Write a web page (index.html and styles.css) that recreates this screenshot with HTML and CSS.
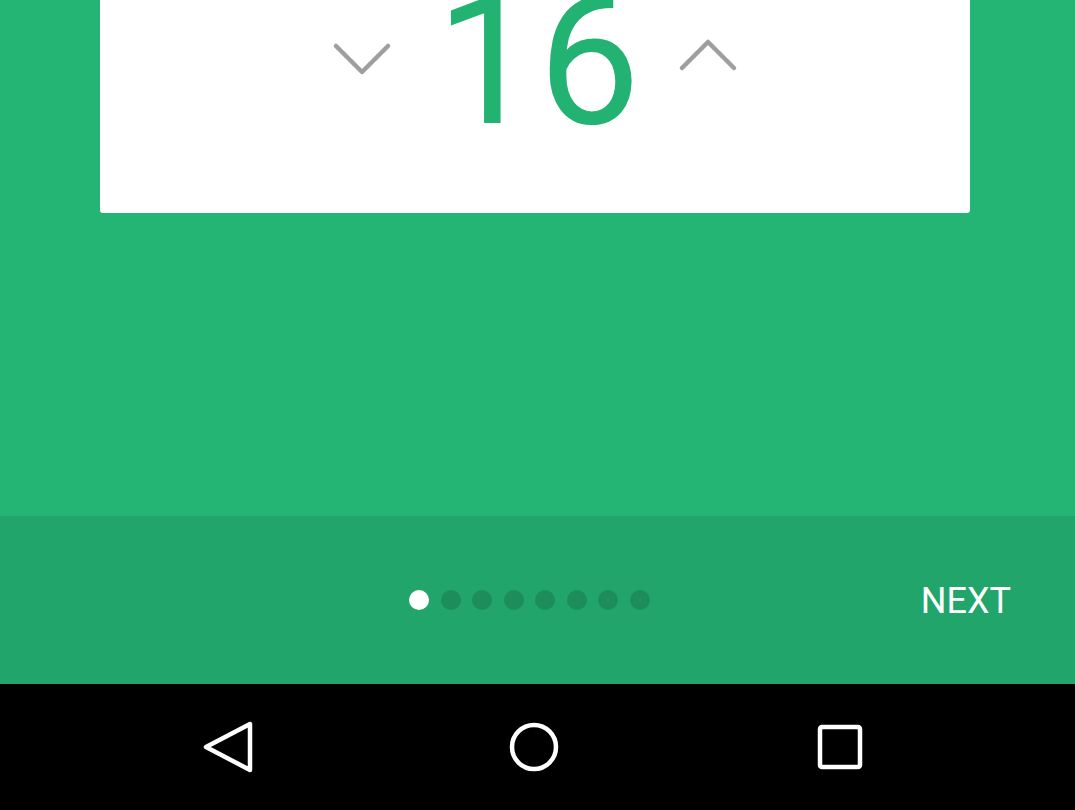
FILE: index.html
```html
<!DOCTYPE html>
<html>
<head>
<meta charset="utf-8">
<link rel="stylesheet" href="styles.css">
</head>
<body>
<div class="screen">
  <main class="content">
    <div class="card">
      <div class="picker">
        <svg class="chev chev-down" width="60" height="36" viewBox="0 0 60 36"><polyline points="4,5 30,31 56,5" fill="none" stroke="#9e9e9e" stroke-width="4.5" stroke-linecap="round" stroke-linejoin="round"/></svg>
        <div class="value">16</div>
        <svg class="chev chev-up" width="60" height="36" viewBox="0 0 60 36"><polyline points="4,31 30,5 56,31" fill="none" stroke="#9e9e9e" stroke-width="4.5" stroke-linecap="round" stroke-linejoin="round"/></svg>
      </div>
    </div>
  </main>
  <footer class="pager">
    <div class="dots">
      <span class="dot active"></span>
      <span class="dot"></span>
      <span class="dot"></span>
      <span class="dot"></span>
      <span class="dot"></span>
      <span class="dot"></span>
      <span class="dot"></span>
      <span class="dot"></span>
    </div>
    <div class="next">NEXT</div>
  </footer>
  <nav class="navbar">
    <svg class="nav-icon" width="60" height="60" viewBox="0 0 60 60"><polygon points="52,7 52,53 8,30" fill="none" stroke="#fff" stroke-width="4.5" stroke-linejoin="round"/></svg>
    <svg class="nav-icon" width="60" height="60" viewBox="0 0 60 60"><circle cx="30" cy="30" r="22" fill="none" stroke="#fff" stroke-width="4.5"/></svg>
    <svg class="nav-icon" width="60" height="60" viewBox="0 0 60 60"><rect x="10" y="10" width="40" height="40" rx="2" fill="none" stroke="#fff" stroke-width="4.5"/></svg>
  </nav>
</div>
</body>
</html>
```

FILE: styles.css
```css
html, body {
  margin: 0;
  padding: 0;
}
body {
  width: 1075px;
  height: 810px;
  overflow: hidden;
  font-family: Roboto, "Liberation Sans", sans-serif;
}
.screen {
  display: flex;
  flex-direction: column;
  height: 810px;
}
.content {
  height: 516px;
  background: #24b473;
  padding: 0 105px 0 100px;
  box-sizing: border-box;
}
.card {
  height: 213px;
  background: #fff;
  border-radius: 0 0 3px 3px;
  overflow: hidden;
}
.picker {
  display: flex;
  justify-content: center;
  align-items: flex-start;
  gap: 38px;
}
.chev-down {
  margin-top: 41px;
}
.chev-up {
  margin-top: 37px;
}
.value {
  font-size: 182px;
  line-height: 182px;
  margin-top: -30px;
  color: #22b271;
  font-weight: 400;
  padding-left: 6px;
}
.pager {
  height: 168px;
  background: #22a56b;
  position: relative;
  display: flex;
  justify-content: center;
  align-items: center;
}
.dots {
  display: flex;
  gap: 11.5px;
  margin-left: -16px;
}
.dot {
  width: 20px;
  height: 20px;
  border-radius: 50%;
  background: #1d8e5b;
}
.dot.active {
  background: #fff;
}
.next {
  position: absolute;
  right: 64px;
  top: 61px;
  color: #fff;
  font-size: 36px;
  line-height: 48px;
}
.navbar {
  height: 126px;
  background: #000;
  display: flex;
  justify-content: flex-start;
  align-items: center;
  padding-left: 198px;
  gap: 246px;
}
.nav-icon {
  display: block;
}
```
